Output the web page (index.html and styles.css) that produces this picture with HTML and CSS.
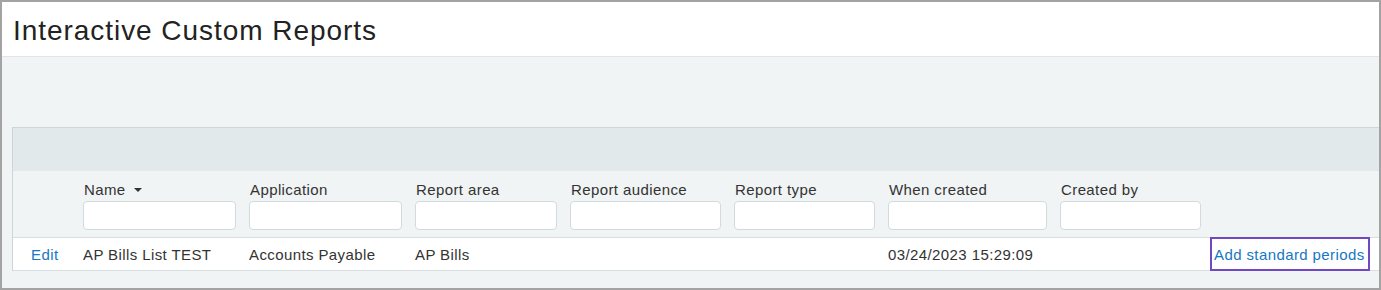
FILE: index.html
```html
<!DOCTYPE html>
<html lang="en">
<head>
<meta charset="utf-8">
<title>Interactive Custom Reports</title>
<link rel="stylesheet" href="styles.css">
</head>
<body>
<div class="frame">
  <header class="page-header">
    <h1 class="title">Interactive Custom Reports</h1>
  </header>
  <main class="content">
    <section class="panel">
      <div class="band"></div>
      <div class="row filters">
        <div class="cell"></div>
        <div class="cell"><div class="label">Name <span class="sort"></span></div><input class="filter" type="text"></div>
        <div class="cell"><div class="label">Application</div><input class="filter" type="text"></div>
        <div class="cell"><div class="label">Report area</div><input class="filter" type="text"></div>
        <div class="cell"><div class="label">Report audience</div><input class="filter" type="text"></div>
        <div class="cell"><div class="label">Report type</div><input class="filter" type="text"></div>
        <div class="cell"><div class="label">When created</div><input class="filter" type="text"></div>
        <div class="cell"><div class="label">Created by</div><input class="filter filter-wide" type="text"></div>
        <div class="cell"></div>
      </div>
      <div class="row data">
        <div class="cell edit"><a class="link" href="#">Edit</a></div>
        <div class="cell">AP Bills List TEST</div>
        <div class="cell">Accounts Payable</div>
        <div class="cell">AP Bills</div>
        <div class="cell"></div>
        <div class="cell"></div>
        <div class="cell">03/24/2023 15:29:09</div>
        <div class="cell"></div>
        <div class="cell action"><a class="link focus" href="#">Add standard periods</a></div>
      </div>
    </section>
  </main>
</div>
</body>
</html>
```

FILE: styles.css
```css
* { box-sizing: border-box; }
html, body { margin: 0; padding: 0; }
body {
  font-family: "Liberation Sans", Arial, sans-serif;
  color: #333;
  background: #fff;
}
.frame {
  width: 1381px;
  height: 290px;
  border: 2px solid #a3a3a3;
  overflow: hidden;
  background: #f0f4f5;
}
.page-header {
  height: 55px;
  background: #fff;
  border-bottom: 1px solid #dfe5ea;
  padding-left: 11px;
  padding-top: 3px;
  display: flex;
  align-items: center;
}
.title {
  margin: 0;
  font-weight: normal;
  font-size: 28px;
  color: #222;
  letter-spacing: 0.95px;
}
.content {
  padding: 70px 0 0 10px;
}
.panel {
  width: 1400px;
  border-top: 1px solid #cdd5d9;
  border-left: 1px solid #cdd5d9;
  letter-spacing: 0.4px;
}
.band {
  height: 43px;
  background: #e1e9eb;
}
.row {
  display: grid;
  grid-template-columns: 69px 166px 166px 155px 164px 154px 172px 150px 1fr;
}
.filters {
  height: 67px;
  padding-top: 10px;
  border-bottom: 1px solid #d8dfe2;
}
.label {
  font-size: 15px;
  line-height: 18px;
  padding-left: 1px;
  color: #333;
  display: flex;
  align-items: center;
}
.sort {
  display: inline-block;
  width: 0;
  height: 0;
  margin-left: 8px;
  border-left: 4px solid transparent;
  border-right: 4px solid transparent;
  border-top: 4px solid #333;
}
.filter {
  display: block;
  margin-top: 2px;
  width: calc(100% - 12px);
  height: 29px;
  border: 1px solid #d3dadd;
  border-radius: 4px;
  background: #fff;
  padding: 0 6px;
  font: inherit;
}
.filter-wide { width: calc(100% - 8px); }
.data {
  height: 33px;
  background: #fff;
  border-bottom: 1px solid #d8dfe2;
  align-items: center;
  font-size: 15px;
}
.cell { padding-left: 1px; white-space: nowrap; }
.edit { padding-left: 18px; }
.link {
  color: #1677c4;
  text-decoration: none;
}
.action { align-self: stretch; display: flex; }
.focus {
  display: flex;
  align-items: center;
  height: 34px;
  margin-top: -1px;
  width: 160px;
  border: 2px solid #7048c4;
  padding-left: 2px;
}
```
